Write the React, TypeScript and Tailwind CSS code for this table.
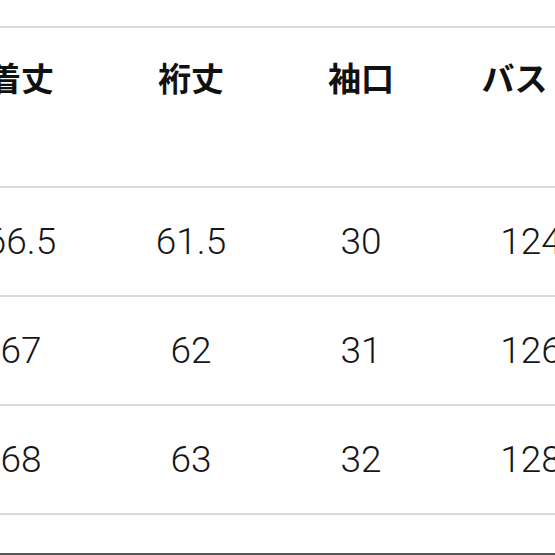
const headers = ["着丈", "裄丈", "袖口", "バスト"];
const rows = [
  ["66.5", "61.5", "30", "124"],
  ["67", "62", "31", "126"],
  ["68", "63", "32", "128"],
];

export default function App() {
  return (
    <div className="w-[555px] h-[555px] overflow-hidden bg-white text-[#111]">
      <div className="pt-[26px]">
        <div className="border-t-2 border-[#dadada] h-[160px] flex ml-[-64px]">
          {headers.map((h) => (
            <div
              key={h}
              className="w-[170px] shrink-0 text-center pt-[31px] text-[33px] leading-[36px] font-bold"
              style={{ fontFamily: '"Noto Sans CJK JP", sans-serif' }}
            >
              {h}
            </div>
          ))}
        </div>
        {rows.map((r, i) => (
          <div
            key={i}
            className="border-t-2 border-[#dadada] h-[109px] flex items-center ml-[-64px]"
          >
            {r.map((v, j) => (
              <div
                key={j}
                className="w-[170px] shrink-0 text-center text-[37px] font-light text-[#161616]"
                style={{ fontFamily: "Roboto, sans-serif" }}
              >
                {v}
              </div>
            ))}
          </div>
        ))}
        <div className="border-t-2 border-[#dadada] h-[40px]" />
        <div className="border-t-2 border-[#555]" />
      </div>
    </div>
  );
}
